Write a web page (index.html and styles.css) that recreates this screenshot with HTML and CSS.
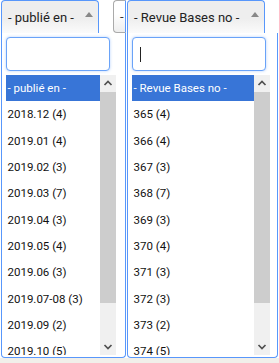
FILE: index.html
```html
<!DOCTYPE html>
<html lang="fr">
<head>
  <meta charset="UTF-8">
  <meta name="viewport" content="width=device-width, initial-scale=1.0">
  <title>Filtres</title>
  <link rel="stylesheet" href="styles.css">
</head>
<body>
  <div class="page">
    <div class="filters">

      <div class="select select-published">
        <div class="select-top">
          <div class="selection">
            <span class="selection-text">- publié en -</span>
            <b class="arrow"></b>
          </div>
          <div class="selection-stub">-</div>
        </div>
        <div class="dropdown">
          <input class="search-field" type="text" aria-label="Rechercher">
          <div class="results">
            <ul class="options">
              <li class="option highlighted">- publié en -</li>
              <li class="option">2018.12 (4)</li>
              <li class="option">2019.01 (4)</li>
              <li class="option">2019.02 (3)</li>
              <li class="option">2019.03 (7)</li>
              <li class="option">2019.04 (3)</li>
              <li class="option">2019.05 (4)</li>
              <li class="option">2019.06 (3)</li>
              <li class="option">2019.07-08 (3)</li>
              <li class="option">2019.09 (2)</li>
              <li class="option">2019.10 (5)</li>
            </ul>
            <div class="scrollbar">
              <div class="scroll-btn">
                <svg width="16" height="16" viewBox="0 0 16 16"><polyline points="4.5,10 8,6.5 11.5,10" fill="none" stroke="#505050" stroke-width="1.7"/></svg>
              </div>
              <div class="scroll-track"><div class="scroll-thumb"></div></div>
              <div class="scroll-btn">
                <svg width="16" height="16" viewBox="0 0 16 16"><polyline points="4.5,6 8,9.5 11.5,6" fill="none" stroke="#505050" stroke-width="1.7"/></svg>
              </div>
            </div>
          </div>
        </div>
      </div>

      <div class="select select-issue">
        <div class="select-top">
          <div class="selection">
            <span class="selection-text">- Revue Bases no -</span>
            <b class="arrow"></b>
          </div>
        </div>
        <div class="dropdown">
          <div class="search-wrap">
            <input class="search-field" type="text" aria-label="Rechercher">
            <span class="caret"></span>
          </div>
          <div class="results">
            <ul class="options">
              <li class="option highlighted">- Revue Bases no -</li>
              <li class="option">365 (4)</li>
              <li class="option">366 (4)</li>
              <li class="option">367 (3)</li>
              <li class="option">368 (7)</li>
              <li class="option">369 (3)</li>
              <li class="option">370 (4)</li>
              <li class="option">371 (3)</li>
              <li class="option">372 (3)</li>
              <li class="option">373 (2)</li>
              <li class="option">374 (5)</li>
            </ul>
            <div class="scrollbar">
              <div class="scroll-btn">
                <svg width="16" height="16" viewBox="0 0 16 16"><polyline points="4.5,10 8,6.5 11.5,10" fill="none" stroke="#505050" stroke-width="1.7"/></svg>
              </div>
              <div class="scroll-track"><div class="scroll-thumb"></div></div>
              <div class="scroll-btn">
                <svg width="16" height="16" viewBox="0 0 16 16"><polyline points="4.5,6 8,9.5 11.5,6" fill="none" stroke="#505050" stroke-width="1.7"/></svg>
              </div>
            </div>
          </div>
        </div>
      </div>

    </div>
    <div class="page-bottom"></div>
  </div>
</body>
</html>
```

FILE: styles.css
```css
* {
  box-sizing: border-box;
}
body {
  margin: 0;
  background-color: #fff;
  font-family: Roboto, Arial, sans-serif;
  color: #111;
}
.page {
  width: 279px;
  height: 363px;
  overflow: hidden;
  display: flex;
  flex-direction: column;
}
.filters {
  display: flex;
  height: 358px;
}
.select {
  display: flex;
  flex-direction: column;
}
.select-published {
  width: 125px;
  margin-left: 1px;
}
.select-issue {
  width: 151px;
  margin-left: 1px;
}
.select-top {
  display: flex;
  height: 33px;
}
.selection {
  display: flex;
  align-items: center;
  justify-content: space-between;
  height: 33px;
  padding-left: 6px;
  border: 1px solid #5897fb;
  border-bottom: none;
  border-radius: 4px 4px 0 0;
  background-image: linear-gradient(to bottom, #eeeeee 55%, #fbfbfb 100%);
  font-size: 13px;
  color: #222;
}
.select-published .selection {
  width: 98px;
}
.select-issue .selection {
  width: 138px;
}
.arrow {
  align-self: flex-start;
  margin-top: 11px;
  margin-right: 5px;
  width: 0;
  height: 0;
  border-style: solid;
  border-width: 0 4px 5px 4px;
  border-color: transparent transparent #888 transparent;
}
.selection-stub {
  margin-left: auto;
  width: 13px;
  height: 33px;
  padding-left: 6px;
  border: 1px solid #aaa;
  border-right-color: #5897fb;
  border-radius: 4px 0 0 4px;
  background-image: linear-gradient(to bottom, #fff 40%, #eee 100%);
  font-size: 13px;
  line-height: 31px;
  color: #333;
  overflow: hidden;
}
.dropdown {
  flex: 1;
  display: flex;
  flex-direction: column;
  gap: 4px;
  padding: 4px 0 2px 4px;
  border: 1px solid #5897fb;
  border-top: none;
  border-radius: 0 0 4px 4px;
  background-color: #fff;
}
.search-wrap {
  position: relative;
}
.search-field {
  display: block;
  height: 34px;
  margin: 0;
  padding: 0 7px;
  border: 1px solid #6aa3f8;
  border-radius: 4px;
  box-shadow: 0 0 3px rgba(88, 151, 251, 0.45);
  background-color: #fff;
  outline: none;
  font-family: inherit;
  font-size: 13px;
}
.select-published .search-field {
  width: 104px;
}
.select-issue .search-field {
  width: 134px;
}
.caret {
  position: absolute;
  left: 8px;
  top: 10px;
  width: 1px;
  height: 15px;
  background-color: #222;
}
.results {
  display: flex;
  height: 280px;
  overflow: hidden;
}
.select-published .results {
  width: 110px;
}
.select-issue .results {
  width: 138px;
}
.options {
  flex: 1;
  margin: 0;
  padding: 0;
  list-style: none;
  overflow: hidden;
}
.option {
  height: 26.33px;
  line-height: 26.33px;
  padding-left: 1.5px;
  font-size: 11.5px;
  color: #111;
  white-space: nowrap;
}
.option.highlighted {
  background-color: #3875d7;
  color: #fff;
}
.scrollbar {
  display: flex;
  flex-direction: column;
  width: 16px;
  background-color: #f0f0f0;
}
.scroll-btn {
  height: 16px;
}
.scroll-btn svg {
  display: block;
}
.scroll-track {
  flex: 1;
  padding-top: 1px;
}
.scroll-thumb {
  height: 211px;
  background-color: #cdcdcd;
}
.page-bottom {
  flex: 1;
  background-color: #f1efea;
}
```
